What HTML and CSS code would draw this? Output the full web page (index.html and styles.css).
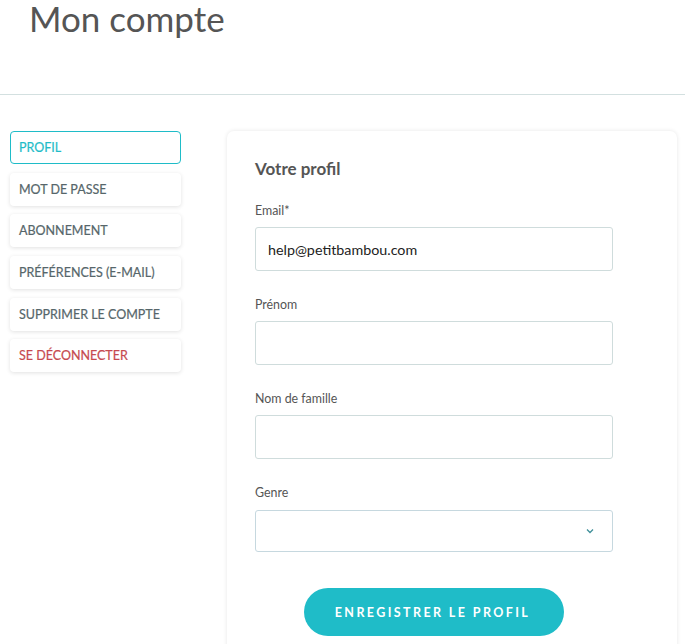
FILE: index.html
```html
<!DOCTYPE html>
<html lang="fr">
<head>
<meta charset="utf-8">
<title>Mon compte</title>
<link rel="stylesheet" href="styles.css">
</head>
<body>
<header class="page-head">
  <h1 class="title">Mon compte</h1>
</header>
<main class="layout">
  <nav class="side">
    <a class="side-item active">PROFIL</a>
    <a class="side-item">MOT DE PASSE</a>
    <a class="side-item">ABONNEMENT</a>
    <a class="side-item">PRÉFÉRENCES (E-MAIL)</a>
    <a class="side-item">SUPPRIMER LE COMPTE</a>
    <a class="side-item danger">SE DÉCONNECTER</a>
  </nav>
  <section class="card">
    <h2 class="card-title">Votre profil</h2>
    <form class="form">
      <div class="field">
        <label class="label">Email*</label>
        <div class="input">help@petitbambou.com</div>
      </div>
      <div class="field">
        <label class="label">Prénom</label>
        <div class="input"></div>
      </div>
      <div class="field">
        <label class="label">Nom de famille</label>
        <div class="input"></div>
      </div>
      <div class="field">
        <label class="label select-label">Genre</label>
        <div class="input select">
          <svg class="chev" width="8" height="6" viewBox="0 0 8 6"><path d="M1 1.5 L4 4.5 L7 1.5" fill="none" stroke="#3f8f99" stroke-width="1.3"/></svg>
        </div>
      </div>
      <div class="actions">
        <button type="button" class="btn">ENREGISTRER LE PROFIL</button>
      </div>
    </form>
  </section>
</main>
</body>
</html>
```
FILE: styles.css
```css
* { box-sizing: border-box; }
html, body { margin: 0; padding: 0; background: #fff; }
body { font-family: Lato, "Open Sans", sans-serif; color: #555; overflow: hidden; height: 644px; }
.page-head { height: 95px; border-bottom: 1px solid #d3e0e0; padding-top: 1px; }
.title { margin: 0; padding: 0 0 0 29px; font-size: 35px; font-weight: 400; line-height: 34px; color: #555; }
.layout { display: flex; align-items: flex-start; padding-top: 36px; }
.side { width: 171px; margin-left: 10px; display: flex; flex-direction: column; gap: 8.7px; }
.side-item { display: flex; align-items: center; height: 33px; padding-left: 8px; font-size: 12.5px; color: #56666a; background: #fff; border-radius: 4px; box-shadow: 0 1px 4px rgba(0,0,0,0.12); border: 1px solid transparent; -webkit-text-stroke: 0.2px currentColor; }
.side-item.active { border-color: #1fbcc8; color: #1fbcc8; box-shadow: none; }
.side-item.danger { color: #c64a4f; }
.card { margin-left: 46px; width: 450px; height: 560px; border-radius: 7px; box-shadow: 0 0 4px rgba(0,0,0,0.1); padding: 26px 28px 0; }
.card-title { margin: 0; font-size: 17px; font-weight: 700; line-height: 24px; color: #555; }
.form { width: 358px; margin-top: 22px; }
.field { margin-bottom: 26px; }
.label { display: block; font-size: 12.4px; line-height: 16px; margin-bottom: 8px; color: #555; }
.select-label { margin-bottom: 9px; }
.input { height: 44px; border: 1px solid #cfdcdc; border-radius: 3px; display: flex; align-items: center; padding-left: 12px; font-size: 14.3px; color: #222; }
.select { height: 42px; border-color: #c6d8df; justify-content: flex-end; padding-right: 18px; }
.chev { display: block; }
.actions { display: flex; justify-content: center; padding-top: 10px; }
.btn { width: 260px; height: 48px; border: 0; border-radius: 24px; background: #1fbcc8; color: #fff; font-family: Lato, sans-serif; font-size: 12.5px; font-weight: 700; letter-spacing: 2.4px; padding-left: 3px; }
```
